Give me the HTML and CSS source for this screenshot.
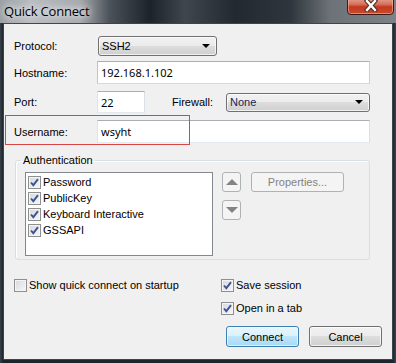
FILE: index.html
```html
<!DOCTYPE html>
<html lang="en">
<head>
    <meta charset="UTF-8">
    <title>Quick Connect</title>
    <link rel="stylesheet" href="styles.css">
</head>
<body>
    <div class="window">
        <div class="titlebar">
            <span class="title">Quick Connect</span>
            <div class="close">
                <svg width="14" height="12" viewBox="0 0 14 12">
                    <path d="M3 1 L11 10 M11 1 L3 10" stroke="#4a2a22" stroke-width="4.4" stroke-linecap="square"/>
                    <path d="M3 1 L11 10 M11 1 L3 10" stroke="#ffffff" stroke-width="2.4" stroke-linecap="square"/>
                </svg>
            </div>
        </div>

        <div class="client">
            <div class="row r1">
                <label class="lbl">Protocol:</label>
                <div class="combo protocol"><span>SSH2</span><i class="arrow"></i></div>
            </div>
            <div class="row r2">
                <label class="lbl">Hostname:</label>
                <div class="edit wide hover">192.168.1.102</div>
            </div>
            <div class="row r3">
                <label class="lbl">Port:</label>
                <div class="edit port">22</div>
                <label class="lbl fw">Firewall:</label>
                <div class="combo firewall"><span class="navy">None</span><i class="arrow"></i></div>
            </div>
            <div class="row r4">
                <label class="lbl">Username:</label>
                <div class="edit wide">wsyht</div>
                <div class="mark"></div>
            </div>

            <fieldset class="group">
                <legend>Authentication</legend>
                <div class="group-body">
                    <div class="list">
                        <div class="item"><span class="chk on"><svg width="11" height="11" viewBox="0 0 11 11"><path d="M2 5.5 L4.3 8.2 L9 2.2" fill="none" stroke="#3d5393" stroke-width="1.9"/></svg></span>Password</div>
                        <div class="item"><span class="chk on"><svg width="11" height="11" viewBox="0 0 11 11"><path d="M2 5.5 L4.3 8.2 L9 2.2" fill="none" stroke="#3d5393" stroke-width="1.9"/></svg></span>PublicKey</div>
                        <div class="item"><span class="chk on"><svg width="11" height="11" viewBox="0 0 11 11"><path d="M2 5.5 L4.3 8.2 L9 2.2" fill="none" stroke="#3d5393" stroke-width="1.9"/></svg></span>Keyboard Interactive</div>
                        <div class="item"><span class="chk on"><svg width="11" height="11" viewBox="0 0 11 11"><path d="M2 5.5 L4.3 8.2 L9 2.2" fill="none" stroke="#3d5393" stroke-width="1.9"/></svg></span>GSSAPI</div>
                    </div>
                    <div class="arrows">
                        <div class="btn-s"><i class="tri up"></i></div>
                        <div class="btn-s"><i class="tri down"></i></div>
                    </div>
                    <div class="btn disabled props">Properties...</div>
                </div>
            </fieldset>

            <div class="options">
                <div class="opt"><span class="chk"></span>Show quick connect on startup</div>
                <div class="opt"><span class="chk on"><svg width="11" height="11" viewBox="0 0 11 11"><path d="M2 5.5 L4.3 8.2 L9 2.2" fill="none" stroke="#3d5393" stroke-width="1.9"/></svg></span>Save session</div>
                <div class="opt"></div>
                <div class="opt"><span class="chk on"><svg width="11" height="11" viewBox="0 0 11 11"><path d="M2 5.5 L4.3 8.2 L9 2.2" fill="none" stroke="#3d5393" stroke-width="1.9"/></svg></span>Open in a tab</div>
            </div>

            <div class="actions">
                <div class="btn default">Connect</div>
                <div class="btn">Cancel</div>
            </div>
        </div>
    </div>
</body>
</html>
```

FILE: styles.css
```css
body {
    margin: 0;
    background: #20272e;
    font-family: "Liberation Sans", Arial, sans-serif;
    font-size: 11px;
    color: #000;
}
.window {
    width: 396px;
    height: 363px;
    box-sizing: border-box;
    padding: 0 3px 3px 3px;
    background: linear-gradient(to right, #39424b 0, #1d242b 3px, #1d242b 393px, #3a424a 396px);
}

/* title bar */
.titlebar {
    height: 23px;
    margin: 0 -3px;
    position: relative;
    background: linear-gradient(to right, #9ba0a5 0, #b9bdc1 30px, #a7abaf 80px, #4a5158 110px, #1c232b 150px, #3f464e 185px, #222930 235px, #2e353c 290px, #6c7277 330px, #7d8286 396px);
}
.title {
    position: absolute;
    left: 4px;
    top: 2px;
    font-family: "Open Sans", "Noto Sans", sans-serif;
    font-size: 13px;
    letter-spacing: -0.2px;
    color: #000;
    text-shadow: 0 0 6px #fff, 0 0 10px rgba(255, 255, 255, 0.9);
}
.close {
    position: absolute;
    left: 347px;
    top: -3px;
    width: 45px;
    height: 16px;
    border: 1px solid #3d1a14;
    border-radius: 0 0 4px 4px;
    background: linear-gradient(#e6a594 0, #d66f5a 40%, #c4381f 55%, #c94a2e 100%);
    box-shadow: inset 0 0 0 1px rgba(255, 200, 180, 0.5);
    display: flex;
    justify-content: center;
    align-items: flex-end;
}
.close svg { display: block; margin-bottom: 2px; }

/* client area */
.client {
    height: 337px;
    box-sizing: border-box;
    border: 1px solid #3c454e;
    background: #f0f0f0;
    padding: 12px 10px 0 10px;
}
.row {
    display: flex;
    align-items: center;
    position: relative;
}
.r1 { height: 20px; }
.r2 { height: 23px; margin-top: 5px; }
.r3 { height: 22px; margin-top: 7px; }
.r4 { height: 23px; margin-top: 7px; }
.lbl {
    width: 83px;
    flex: none;
}
.lbl.fw {
    width: 54px;
    margin-left: 27px;
}

.edit {
    height: 100%;
    box-sizing: border-box;
    background: #fff;
    border: 1px solid;
    border-color: #abadb3 #dbdfe6 #e3e9ef #e2e3ea;
    padding: 0 3px;
    display: flex;
    align-items: center;
    font-family: "Noto Sans", sans-serif;
    font-size: 11px;
}
.edit.hover { border-color: #8fb5d8 #b9d4ec #c7def2 #a9c9e6; }
.edit.wide { width: 273px; }
.edit.port { width: 48px; }

.combo {
    height: 20px;
    box-sizing: border-box;
    border: 1px solid #707070;
    border-radius: 3px;
    background: linear-gradient(#f2f2f2, #ebebeb 50%, #dddddd 50%, #cfcfcf);
    box-shadow: inset 0 0 0 1px rgba(255, 255, 255, 0.7);
    display: flex;
    align-items: center;
    padding: 0 4px 0 3px;
}
.combo span { flex: 1; }
.combo.protocol { width: 119px; margin-left: 1px; }
.combo.firewall { width: 144px; height: 19px; }
.navy { color: #14235a; }
.arrow {
    width: 0;
    height: 0;
    border-left: 4px solid transparent;
    border-right: 4px solid transparent;
    border-top: 4px solid #000;
    margin-right: 2px;
}

.mark {
    position: absolute;
    left: -9px;
    top: -5px;
    width: 185px;
    height: 30px;
    box-sizing: border-box;
    border: 1.5px solid #d94444;
}

/* authentication group */
.group {
    margin: 11px 0 0 1px;
    width: 355px;
    box-sizing: border-box;
    border: 1px solid #d5dfe5;
    border-radius: 3px;
    padding: 5px 0 3px 9px;
    box-shadow: inset 1px 1px 0 #fff;
}
.group legend {
    padding: 0 2px;
    margin-left: -4px;
    line-height: 13px;
    font-size: 11px;
}
.group-body {
    display: flex;
    align-items: flex-start;
}
.list {
    width: 188px;
    height: 84px;
    box-sizing: border-box;
    border: 1px solid #828790;
    background: #fff;
    padding: 1px 0 0 2px;
}
.item {
    height: 16px;
    display: flex;
    align-items: center;
}
.chk {
    width: 13px;
    height: 13px;
    box-sizing: border-box;
    border: 1px solid #8e8f8f;
    background: linear-gradient(135deg, #d6d9dd, #f7f7f7);
    box-shadow: inset 0 0 0 1px #f4f4f4;
    margin-right: 2px;
    display: flex;
    align-items: center;
    justify-content: center;
    flex: none;
}
.chk svg { display: block; }
.arrows {
    margin-left: 9px;
    display: flex;
    flex-direction: column;
    gap: 8px;
}
.btn-s {
    width: 19px;
    height: 20px;
    box-sizing: border-box;
    border: 1px solid #adb2b5;
    border-radius: 3px;
    background: #f4f4f4;
    display: flex;
    align-items: center;
    justify-content: center;
}
.tri {
    width: 0;
    height: 0;
    border-left: 6px solid transparent;
    border-right: 6px solid transparent;
}
.tri.up { border-bottom: 6px solid #838383; }
.tri.down { border-top: 6px solid #838383; }

.btn {
    width: 73px;
    height: 21px;
    box-sizing: border-box;
    border: 1px solid #707070;
    border-radius: 3px;
    background: linear-gradient(#f2f2f2, #ebebeb 50%, #dddddd 50%, #cfcfcf);
    box-shadow: inset 0 0 0 1px rgba(255, 255, 255, 0.7);
    display: flex;
    align-items: center;
    justify-content: center;
}
.btn.disabled {
    border-color: #adb2b5;
    background: #f4f4f4;
    box-shadow: none;
    color: #838383;
}
.btn.props {
    width: 93px;
    height: 20px;
    margin-left: 10px;
}
.btn.default {
    border-color: #3c7fb1;
    background: linear-gradient(#eaf6fd, #d9f0fc 50%, #bee6fd 50%, #a7d9f5);
    box-shadow: inset 0 0 0 1px rgba(255, 255, 255, 0.6);
}

/* bottom options */
.options {
    display: grid;
    grid-template-columns: 207px 1fr;
    row-gap: 7px;
    margin-top: 17px;
}
.opt {
    height: 16px;
    display: flex;
    align-items: center;
}
.actions {
    display: flex;
    justify-content: flex-end;
    gap: 10px;
    margin-top: 10px;
}
```
